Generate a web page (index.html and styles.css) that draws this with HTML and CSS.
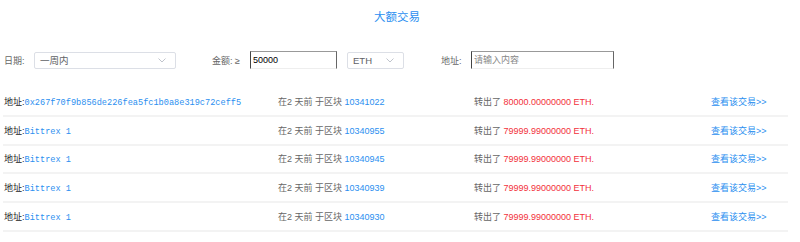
FILE: index.html
```html
<!DOCTYPE html>
<html lang="zh-CN">
<head>
    <meta charset="UTF-8">
    <meta name="viewport" content="width=device-width, initial-scale=1.0">
    <title>大额交易</title>
    <link rel="stylesheet" href="styles.css">
</head>
<body>
    <div class="page">
        <h1 class="title">大额交易</h1>

        <!-- 筛选条件 -->
        <div class="filters">
            <span class="label label-date">日期:</span>
            <div class="select select-date">
                <span>一周内</span>
                <svg class="arrow" width="8" height="5" viewBox="0 0 8 5"><path d="M0.5 0.5 L4 4 L7.5 0.5" fill="none" stroke="#c0c4cc" stroke-width="1"/></svg>
            </div>
            <span class="label label-amount">金额: ≥</span>
            <input class="text-input input-amount" type="text" value="50000">
            <div class="select select-unit">
                <span>ETH</span>
                <svg class="arrow" width="8" height="5" viewBox="0 0 8 5"><path d="M0.5 0.5 L4 4 L7.5 0.5" fill="none" stroke="#c0c4cc" stroke-width="1"/></svg>
            </div>
            <span class="label label-addr">地址:</span>
            <input class="text-input input-addr" type="text" placeholder="请输入内容">
        </div>

        <!-- 交易列表 -->
        <div class="list">
            <div class="row">
                <div class="col"><span class="key">地址:</span><a class="mono">0x267f70f9b856de226fea5fc1b0a8e319c72ceff5</a></div>
                <div class="col gray">在2 天前 于区块 <a class="link">10341022</a></div>
                <div class="col gray">转出了 <span class="red">80000.00000000 ETH.</span></div>
                <div class="col"><a class="link">查看该交易&gt;&gt;</a></div>
            </div>
            <div class="row">
                <div class="col"><span class="key">地址:</span><a class="mono">Bittrex 1</a></div>
                <div class="col gray">在2 天前 于区块 <a class="link">10340955</a></div>
                <div class="col gray">转出了 <span class="red">79999.99000000 ETH.</span></div>
                <div class="col"><a class="link">查看该交易&gt;&gt;</a></div>
            </div>
            <div class="row">
                <div class="col"><span class="key">地址:</span><a class="mono">Bittrex 1</a></div>
                <div class="col gray">在2 天前 于区块 <a class="link">10340945</a></div>
                <div class="col gray">转出了 <span class="red">79999.99000000 ETH.</span></div>
                <div class="col"><a class="link">查看该交易&gt;&gt;</a></div>
            </div>
            <div class="row">
                <div class="col"><span class="key">地址:</span><a class="mono">Bittrex 1</a></div>
                <div class="col gray">在2 天前 于区块 <a class="link">10340939</a></div>
                <div class="col gray">转出了 <span class="red">79999.99000000 ETH.</span></div>
                <div class="col"><a class="link">查看该交易&gt;&gt;</a></div>
            </div>
            <div class="row">
                <div class="col"><span class="key">地址:</span><a class="mono">Bittrex 1</a></div>
                <div class="col gray">在2 天前 于区块 <a class="link">10340930</a></div>
                <div class="col gray">转出了 <span class="red">79999.99000000 ETH.</span></div>
                <div class="col"><a class="link">查看该交易&gt;&gt;</a></div>
            </div>
        </div>
    </div>
</body>
</html>
```

FILE: styles.css
```css
* { box-sizing: border-box; margin: 0; padding: 0; }
body {
    font-family: 'Liberation Sans', 'Noto Sans CJK SC', sans-serif;
    font-size: 9px;
    color: #333;
    background: #fff;
}
.page { padding: 0 0 0 3px; width: 788px; }
.title {
    font-size: 11.5px;
    font-weight: normal;
    line-height: 14px;
    padding-top: 10px;
    text-align: center;
    color: #2b8ff0;
    padding-left: 3px;
}
.filters {
    display: flex;
    align-items: center;
    height: 18px;
    margin-top: 27px;
    padding-left: 1px;
}
.label { color: #666; white-space: nowrap; }
.label-date { width: 30px; }
.label-amount { margin-left: 36px; width: 38px; }
.label-addr { margin-left: 37px; width: 30px; }
.select {
    height: 17px;
    border: 1px solid #dcdfe6;
    border-radius: 2px;
    display: flex;
    align-items: center;
    justify-content: space-between;
    padding: 0 9px 0 5px;
    color: #606266;
    font-size: 9.5px;
}
.select-date { width: 142px; }
.select-unit { width: 57px; margin-left: 10px; }
.arrow { display: block; }
.text-input {
    height: 18px;
    font-family: inherit;
    font-size: 9px;
    color: #000;
    padding: 0 2px;
    border-style: solid;
    border-width: 1px;
    border-color: #999 #666 #eee #444;
    outline: none;
}
.text-input::placeholder { color: #888; }
.input-amount { width: 87px; }
.input-addr { width: 143px; }
.list { margin-top: 19px; }
.row {
    display: grid;
    grid-template-columns: 274px 196px 237px 1fr;
    align-items: center;
    height: 28.8px;
    border-bottom: 2px solid #f3f3f3;
    padding-left: 1px;
    white-space: nowrap;
}
.key { color: #222; }
.mono {
    font-family: 'Liberation Mono', 'DejaVu Sans Mono', monospace;
    font-size: 8.6px;
    color: #2b8ff0;
}
.gray { color: #666; }
.link { color: #2b8ff0; }
.red { color: #f2303a; }
```
